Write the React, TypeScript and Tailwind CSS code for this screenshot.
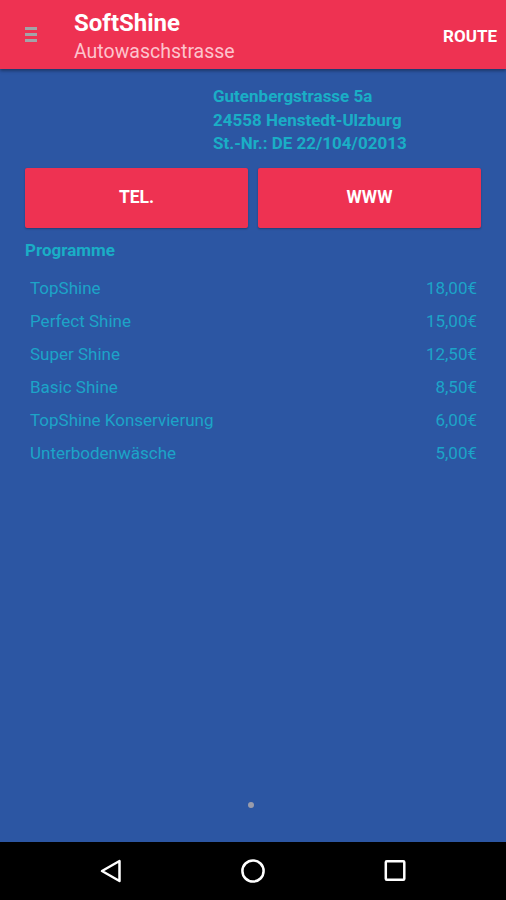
const programme = [
  { name: 'TopShine', price: '18,00€' },
  { name: 'Perfect Shine', price: '15,00€' },
  { name: 'Super Shine', price: '12,50€' },
  { name: 'Basic Shine', price: '8,50€' },
  { name: 'TopShine Konservierung', price: '6,00€' },
  { name: 'Unterbodenwäsche', price: '5,00€' },
];

function Toolbar() {
  return (
    <header className="relative z-10 flex h-[69px] shrink-0 items-start bg-[#ee3252] shadow-[0_2px_3px_rgba(0,0,0,0.35)]">
      <div className="flex w-[74px] pl-[25px] pt-[27px]">
        <div className="flex w-[12px] flex-col gap-[3px]">
          <span className="h-[3px] bg-[#a3a3a8]" />
          <span className="h-[3px] bg-[#a3a3a8]" />
          <span className="h-[3px] bg-[#a3a3a8]" />
        </div>
      </div>
      <div className="flex flex-1 flex-col pt-[9px]">
        <span className="text-[24px] font-bold leading-[28px] text-white">SoftShine</span>
        <span className="mt-[3px] text-[19.5px] leading-[24px] text-[#fdc3cd]">Autowaschstrasse</span>
      </div>
      <span className="pr-[9px] pt-[26px] text-[17px] font-bold leading-[20px] text-white">ROUTE</span>
    </header>
  );
}

function NavBar() {
  return (
    <nav className="flex h-[58px] shrink-0 items-center justify-center gap-[118px] bg-black pr-[1px]">
      <svg width="24" height="24" viewBox="0 0 24 24" fill="none" stroke="white" strokeWidth="2.5" strokeLinejoin="round">
        <path d="M20.5 2 L20.5 22 L3 12 Z" />
      </svg>
      <svg width="24" height="24" viewBox="0 0 24 24" fill="none" stroke="white" strokeWidth="2.5">
        <circle cx="12" cy="12" r="10.6" />
      </svg>
      <svg width="24" height="24" viewBox="0 0 24 24" fill="none" stroke="white" strokeWidth="2.5">
        <rect x="2.8" y="2.2" width="18.5" height="18.5" rx="1" />
      </svg>
    </nav>
  );
}

export default function App() {
  return (
    <div
      className="flex h-[900px] w-[506px] flex-col overflow-hidden bg-[#2c56a3]"
      style={{ fontFamily: 'Roboto, "Noto Sans", sans-serif' }}
    >
      <Toolbar />
      <main className="flex flex-1 flex-col px-[25px]">
        <div className="mt-[16px] pl-[188px] text-[17px] font-bold leading-[23.5px] text-[#1aaec6]">
          <div>Gutenbergstrasse 5a</div>
          <div>24558 Henstedt-Ulzburg</div>
          <div>St.-Nr.: DE 22/104/02013</div>
        </div>
        <div className="mt-[12px] grid grid-cols-2 gap-[10px]">
          <button className="h-[60px] rounded-[2px] bg-[#ee3252] text-[17.5px] font-bold text-white shadow-[0_1px_2px_rgba(0,0,0,0.3)]">
            TEL.
          </button>
          <button className="h-[60px] rounded-[2px] bg-[#ee3252] text-[17.5px] font-bold text-white shadow-[0_1px_2px_rgba(0,0,0,0.3)]">
            WWW
          </button>
        </div>
        <div className="mt-[11px] text-[17px] font-bold leading-[22px] text-[#1aaec6]">Programme</div>
        <ul className="mt-[12px] flex flex-col pl-[5px] pr-[4px]">
          {programme.map((p) => (
            <li key={p.name} className="flex h-[33px] items-center justify-between text-[17px] text-[#1ca4c8]">
              <span>{p.name}</span>
              <span>{p.price}</span>
            </li>
          ))}
        </ul>
        <div className="flex flex-1 items-end justify-center pb-[34px] pr-[4px]">
          <span className="h-[6px] w-[6px] rounded-full bg-[#9a9cab]" />
        </div>
      </main>
      <NavBar />
    </div>
  );
}
